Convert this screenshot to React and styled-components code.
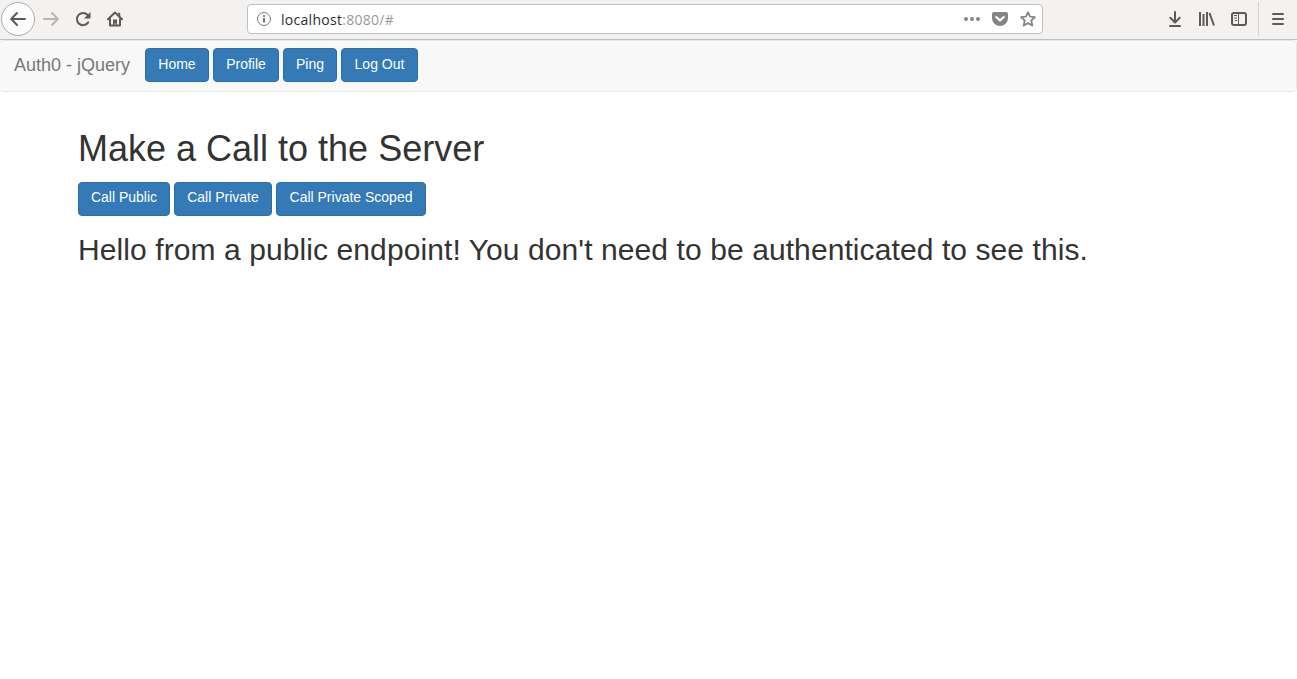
import React from 'react';
import styled, { createGlobalStyle } from 'styled-components';

const GlobalStyle = createGlobalStyle`
  *, *::before, *::after { box-sizing: border-box; }
  body {
    margin: 0;
    background: #fff;
    color: #333;
    font: 14px/20px "Liberation Sans", Arial, sans-serif;
    overflow: hidden;
  }
`;

const Toolbar = styled.header`
  display: flex;
  align-items: flex-start;
  height: 40px;
  background: #f3f2f0;
  border-bottom: 1px solid #c0bfbd;
`;

const ToolGroup = styled.div`
  display: flex;
  align-items: center;
  height: 38px;
  gap: ${(p) => p.$gap || 16}px;
  padding-left: ${(p) => p.$left || 0}px;
`;

const BackButton = styled.div`
  display: flex;
  align-items: center;
  justify-content: center;
  width: 34px;
  height: 34px;
  margin: 0 -8px 0 1px;
  border: 1px solid #acaba9;
  border-radius: 50%;
  background: #fdfdfd;
`;

const Glyph = styled.svg`
  display: block;
  flex: none;
  width: 16px;
  height: 16px;
  color: ${(p) => p.$tone || '#5c5b5a'};
  fill: none;
  stroke: currentColor;
  stroke-width: 2;
  stroke-linecap: round;
  stroke-linejoin: round;
`;

const AddressBar = styled.div`
  display: flex;
  align-items: center;
  width: 796px;
  height: 30px;
  margin: 4px 0 0 124px;
  padding: 0 6px 0 8px;
  background: #fff;
  border: 1px solid #c1c0be;
  border-radius: 4px;
`;

const Url = styled.span`
  flex: 1;
  margin-left: 9px;
  padding-top: 1px;
  font: 14px/20px "Open Sans", "Noto Sans", sans-serif;
  letter-spacing: 0.28px;
  color: #999;
`;

const Host = styled.span`
  color: #2d2d2d;
`;

const Divider = styled.div`
  width: 1px;
  height: 34px;
  margin: 2px 11px 0;
  background: #d5d4d2;
`;

const Navbar = styled.nav`
  display: flex;
  align-items: flex-start;
  height: 52px;
  margin-left: -1px;
  padding: 7px 0 0 14px;
  background: #f8f8f8;
  border: 1px solid #e7e7e7;
  border-radius: 4px;
`;

const Brand = styled.span`
  width: 131px;
  padding-top: 7px;
  font-size: 18px;
  line-height: 20px;
  color: #777;
  white-space: nowrap;
`;

const ButtonRow = styled.div`
  display: flex;
  gap: 4px;
`;

const Button = styled.button`
  width: ${(p) => p.$width}px;
  height: 34px;
  padding: 0 0 ${(p) => p.$lift || 2}px;
  border: 1px solid #2e6da4;
  border-radius: 4px;
  background: #337ab7;
  color: #fff;
  font: 14px/20px "Liberation Sans", Arial, sans-serif;
  white-space: nowrap;
`;

const Content = styled.main`
  padding: 37px 78px 0;
`;

const Title = styled.h1`
  margin: 0 0 13px;
  font-size: 36px;
  font-weight: 400;
  line-height: 40px;
`;

const Message = styled.h2`
  margin: 17px 0 0;
  font-size: 30px;
  font-weight: 400;
  line-height: 34px;
  letter-spacing: 0.09px;
  white-space: nowrap;
`;

const navItems = [['Home', 64], ['Profile', 66], ['Ping', 54], ['Log Out', 77]];
const calls = [['Call Public', 92], ['Call Private', 98], ['Call Private Scoped', 150]];

function Buttons({ items, lift }) {
  return (
    <ButtonRow>
      {items.map(([label, width]) => (
        <Button key={label} $width={width} $lift={lift}>{label}</Button>
      ))}
    </ButtonRow>
  );
}

export default function App() {
  return (
    <>
      <GlobalStyle />
      <Toolbar>
        <ToolGroup>
          <BackButton>
            <Glyph viewBox="0 0 16 16"><path d="M15 8H1.5M7 2L1.2 8L7 14" /></Glyph>
          </BackButton>
          <Glyph viewBox="0 0 16 16" $tone="#b8b7b6"><path d="M1 8h13.5M9 2l5.8 6L9 14" /></Glyph>
          <Glyph viewBox="0 0 16 16">
            <path d="M13.2 11.4A6.1 6.1 0 1 1 12.6 4" />
            <path d="M15.5 1v6.5H9z" fill="currentColor" stroke="none" />
          </Glyph>
          <Glyph viewBox="0 0 16 16">
            <path d="M1 8.2L8 1.5l7 6.7M3 8v6.5h10V8" />
            <path d="M6 15V8.5h4V15H8.8v-2.5H7.3V15z" fill="currentColor" stroke="none" />
            <path d="M11.5 2.5h1v2" strokeWidth="1.5" />
          </Glyph>
        </ToolGroup>
        <AddressBar>
          <Glyph viewBox="0 0 16 16" $tone="#777">
            <circle cx="8" cy="8" r="6.5" strokeWidth="1" />
            <path d="M8 7v4.5" strokeWidth="2" strokeLinecap="butt" />
            <circle cx="8" cy="5" r="1.1" fill="currentColor" stroke="none" />
          </Glyph>
          <Url><Host>localhost</Host>:8080/#</Url>
          <ToolGroup $gap={12}>
            <Glyph viewBox="0 0 16 16" $tone="#858585">
              <g fill="currentColor" stroke="none">
                <circle cx="2" cy="8" r="2" /><circle cx="8" cy="8" r="2" /><circle cx="14" cy="8" r="2" />
              </g>
            </Glyph>
            <Glyph viewBox="0 0 16 16" $tone="#858585">
              <path d="M2 1h12a2 2 0 0 1 2 2v4.5a8 7.5 0 0 1-16 0V3a2 2 0 0 1 2-2z" fill="currentColor" stroke="none" />
              <path d="M4.3 6l3.7 3.5L11.7 6" stroke="#fff" />
            </Glyph>
            <Glyph viewBox="0 0 16 16" $tone="#858585">
              <path d="M8 1.2l2.1 4.5 4.8.5-3.6 3.3 1 5L8 12.1l-4.3 2.4 1-5L1.1 6.2l4.8-.5z" strokeWidth="1.8" />
            </Glyph>
          </ToolGroup>
        </AddressBar>
        <ToolGroup $left={124}>
          <Glyph viewBox="0 0 16 16"><path d="M8 1v10M3.3 6.8L8 11.5l4.7-4.7M3 15h10" /></Glyph>
          <Glyph viewBox="0 0 16 16">
            <path d="M1 1v14M4.5 3v12M8 1v14M10.5 2L15 14.5" strokeLinecap="butt" />
          </Glyph>
          <Glyph viewBox="0 0 16 16">
            <rect x="1" y="2" width="14" height="12" rx="2" />
            <path d="M7.5 2v12M3 4.5h3M3 7h3M4 9.5h2" strokeWidth="1" strokeLinecap="butt" />
          </Glyph>
        </ToolGroup>
        <Divider />
        <ToolGroup>
          <Glyph viewBox="0 0 16 16"><path d="M3 3h10M3 8h10M3 13h10" /></Glyph>
        </ToolGroup>
      </Toolbar>
      <Navbar>
        <Brand>Auth0 - jQuery</Brand>
        <Buttons items={navItems} />
      </Navbar>
      <Content>
        <Title>Make a Call to the Server</Title>
        <Buttons items={calls} lift={4} />
        <Message>Hello from a public endpoint! You don't need to be authenticated to see this.</Message>
      </Content>
    </>
  );
}
